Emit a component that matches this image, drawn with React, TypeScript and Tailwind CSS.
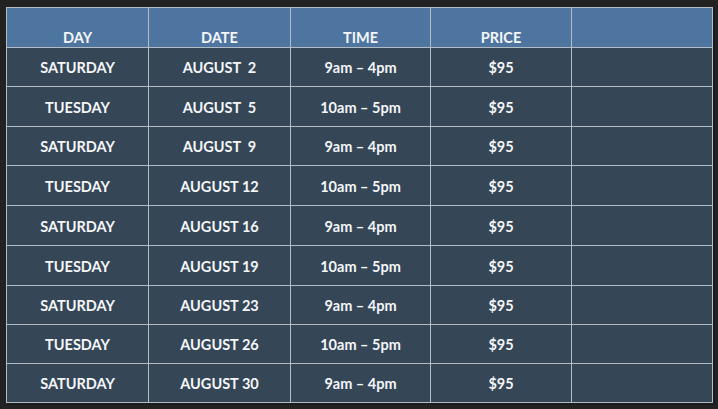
import React from "react";

const rows: [string, string, string, string][] = [
  ["SATURDAY", "AUGUST\u00a0 2", "9am – 4pm", "$95"],
  ["TUESDAY", "AUGUST\u00a0 5", "10am – 5pm", "$95"],
  ["SATURDAY", "AUGUST\u00a0 9", "9am – 4pm", "$95"],
  ["TUESDAY", "AUGUST 12", "10am – 5pm", "$95"],
  ["SATURDAY", "AUGUST 16", "9am – 4pm", "$95"],
  ["TUESDAY", "AUGUST 19", "10am – 5pm", "$95"],
  ["SATURDAY", "AUGUST 23", "9am – 4pm", "$95"],
  ["TUESDAY", "AUGUST 26", "10am – 5pm", "$95"],
  ["SATURDAY", "AUGUST 30", "9am – 4pm", "$95"],
];

const heights = ["h-[39px]", "h-[40px]", "h-[39px]", "h-[40px]", "h-[40px]", "h-[40px]", "h-[39px]", "h-[39px]", "h-[39px]"];

const cell = "border-r border-b border-[#b4bcc6] flex items-center justify-center pt-[2px]";

export default function App() {
  return (
    <div
      className="w-[718px] h-[409px] bg-[#222222] pt-[7px] pl-[6px] text-[#f4f6f8] font-bold text-[14.5px]"
      style={{ fontFamily: "Lato, 'Open Sans', sans-serif" }}
    >
      <div className="w-[707px] border-l border-t border-[#b4bcc6] grid grid-cols-[142px_142px_140px_141px_141px] bg-[#354657] shadow-[2px_2px_0_#1c1c1c]">
        {["DAY", "DATE", "TIME", "PRICE", ""].map((h, i) => (
          <div
            key={i}
            className="h-[40px] bg-[#4e75a0] border-r border-b border-[#b4bcc6] flex items-center justify-center pt-[20px]"
          >
            {h}
          </div>
        ))}
        {rows.map((r, ri) => (
          <React.Fragment key={ri}>
            {[...r, ""].map((c, ci) => (
              <div key={ci} className={`${cell} ${heights[ri]}`}>
                {c}
              </div>
            ))}
          </React.Fragment>
        ))}
      </div>
    </div>
  );
}
